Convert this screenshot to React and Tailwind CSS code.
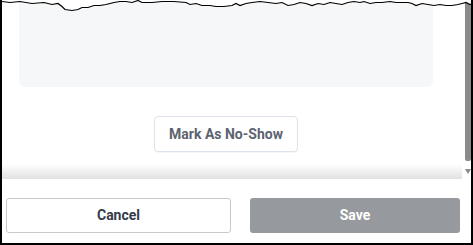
import React from 'react';

const tearPoints = [
  [0, 1], [8, 2], [18, 1], [30, 3], [42, 2], [50, 4], [56, 3], [60, 6], [63, 9], [70, 10], [76, 9], [80, 7],
  [86, 7], [92, 5], [98, 5], [104, 4], [112, 2], [118, 1], [124, 1], [130, 2], [136, 0], [140, 2], [150, 2],
  [160, 1], [172, 1], [184, 2], [188, 4], [194, 3], [200, 5], [208, 5], [214, 6], [222, 6], [230, 5], [234, 3],
  [238, 5], [244, 3], [250, 2], [258, 1], [266, 2], [274, 3], [280, 2], [286, 5], [292, 4], [298, 2], [304, 3],
  [310, 5], [316, 3], [322, 4], [328, 2], [334, 3], [340, 4], [346, 2], [352, 1], [358, 2], [362, 1], [368, 3],
  [374, 2], [380, 2], [388, 1], [394, 2], [400, 2], [406, 2], [410, 3], [414, 5], [420, 3], [426, 4], [432, 5],
  [438, 4], [444, 5], [450, 5], [456, 4], [460, 3], [464, 2], [468, 4], [473, 2],
];

const TornEdge = () => {
  const line = tearPoints.map(([x, y]) => `${x},${y + 0.5}`).join(' ');
  return (
    <svg className="absolute left-0 top-0 pointer-events-none" width="473" height="14" viewBox="0 0 473 14">
      <polygon points={`0,0 ${line} 473,0`} fill="#ffffff" />
      <polyline points={line} fill="none" stroke="#000000" strokeWidth="1.2" />
    </svg>
  );
};

export default function App() {
  return (
    <div
      className="relative w-[473px] h-[245px] bg-white border-l-2 border-r-2 border-b-2 border-black flex flex-col overflow-hidden"
      style={{ fontFamily: 'Roboto, "Liberation Sans", Arial, sans-serif' }}
    >
      {/* Scroll area */}
      <div className="relative h-[180px] flex shrink-0">
        <div className="pl-[17px]">
          <div className="w-[414px] flex flex-col items-center">
            <div className="w-full h-[87px] bg-[#f6f7f9] rounded-b-[6px]" />
            <button className="mt-[29px] h-[36px] px-[14px] bg-white border border-[#dde3ea] rounded-[4px] text-[14px] font-bold text-[#5c6370] shadow-[0_1px_0_rgba(0,0,0,0.03)]">
              Mark As No-Show
            </button>
          </div>
        </div>
        <div className="flex-1" />
        {/* scrollbar */}
        <div className="w-[6px] flex flex-col items-center">
          <div className="w-[6px] h-[161px] bg-[#8a8a8a] rounded-b-[2px]" />
          <svg className="mt-[8px]" width="6" height="6" viewBox="0 0 6 6">
            <polygon points="0,0 6,0 3,5" fill="#8a8a8a" />
          </svg>
        </div>
        {/* bottom shade */}
        <div className="absolute left-0 bottom-[1px] w-[460px] h-[15px] bg-gradient-to-b from-white/0 to-[#e1e1e1] pointer-events-none" />
      </div>

      {/* Footer */}
      <div className="flex pt-[18px] pl-[4px] gap-[19px]">
        <button className="w-[225px] h-[35px] bg-white border border-[#c9c9c9] rounded-[3px] text-[14px] font-bold text-[#333b4a]">
          Cancel
        </button>
        <button className="w-[210px] h-[35px] bg-[#96999e] rounded-[3px] text-[14px] font-bold text-white">
          Save
        </button>
      </div>

      <TornEdge />
    </div>
  );
}
